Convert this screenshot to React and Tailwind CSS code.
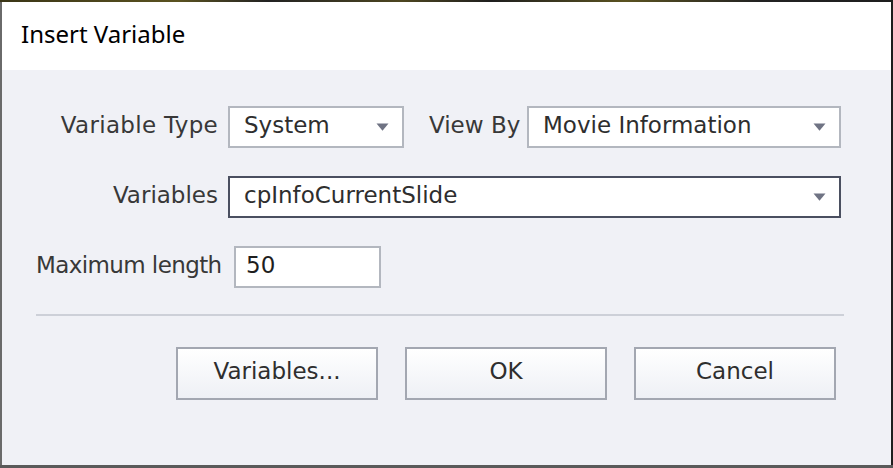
import React from "react";

const titleFont = { fontFamily: '"Noto Sans", "Open Sans", sans-serif' };
const bodyFont = { fontFamily: '"DejaVu Sans", Verdana, sans-serif' };

function Arrow() {
  return (
    <svg width="13" height="8" viewBox="0 0 13 8" className="shrink-0">
      <path d="M0.5 0.5 L12.5 0.5 L6.5 7.8 Z" fill="#6f7383" />
    </svg>
  );
}

function Dropdown({ value, className, focused }) {
  return (
    <div
      className={
        "flex h-[42px] items-center justify-between bg-white pl-[14px] pr-[13px] border-2 " +
        (focused ? "border-[#4a4f60] " : "border-[#b3b7bf] ") +
        className
      }
    >
      <span className="text-[23px] leading-none text-[#2e2e2e] pb-[4px] whitespace-nowrap">{value}</span>
      <Arrow />
    </div>
  );
}

function Btn({ children }) {
  return (
    <button className="flex h-[53px] w-[202px] items-center justify-center border-2 border-[#a3a7b1] bg-[linear-gradient(#ffffff,#eef0f5)] text-[23px] leading-none text-[#2e2e2e] pb-[4px]">
      {children}
    </button>
  );
}

export default function App() {
  return (
    <div className="w-[893px] h-[468px] overflow-hidden flex flex-col bg-[#5c5c5c]" style={bodyFont}>
      <div className="h-[2px] shrink-0 bg-[linear-gradient(90deg,#3a3516_0%,#5a5220_20%,#222_30%,#4d4620_45%,#1e1e1e_55%,#5a5220_70%,#222_85%,#1e1e1e_100%)]" />
      <div className="flex flex-1">
        <div className="w-[2px] bg-[#6a6a6a]" />
        <div className="flex-1 flex flex-col">
          <div className="h-[68px] shrink-0 bg-white flex items-center pl-[19px] pb-[4px]" style={titleFont}>
            <span className="text-[24px] text-black leading-none">Insert Variable</span>
          </div>
          <div className="flex-1 bg-[#f0f1f6] flex flex-col">
            {/* Row 1 */}
            <div className="flex items-center mt-[36px]">
              <div className="w-[216px] text-right text-[23px] leading-none text-[#383838] pb-[4px] whitespace-nowrap tracking-[0.3px]">Variable Type</div>
              <Dropdown value="System" className="ml-[10px] w-[176px]" />
              <div className="ml-[25px] text-[23px] leading-none text-[#383838] pb-[4px] w-[89px] whitespace-nowrap">View By</div>
              <Dropdown value="Movie Information" className="ml-[9px] w-[314px]" />
            </div>
            {/* Row 2 */}
            <div className="flex items-center mt-[28px]">
              <div className="w-[216px] text-right text-[23px] leading-none text-[#383838] pb-[4px]">Variables</div>
              <Dropdown value="cpInfoCurrentSlide" className="ml-[10px] w-[613px]" focused />
            </div>
            {/* Row 3 */}
            <div className="flex items-center mt-[28px] pl-[34px]">
              <div className="w-[198px] whitespace-nowrap text-[23px] leading-none text-[#383838] pb-[4px] tracking-[-0.6px]">Maximum length</div>
              <div className="h-[42px] w-[147px] bg-white border-2 border-[#b3b7bf] flex items-center pl-[10px]">
                <span className="text-[23px] leading-none text-[#1e1e1e] pb-[4px]">50</span>
              </div>
            </div>
            {/* Separator */}
            <div className="mt-[26px] ml-[34px] w-[808px] h-[2px] bg-[#cdd0d8]" />
            {/* Buttons */}
            <div className="flex mt-[31px] pl-[174px] gap-[27px]">
              <Btn>Variables...</Btn>
              <Btn>OK</Btn>
              <Btn>Cancel</Btn>
            </div>
          </div>
        </div>
        <div className="w-[2px] bg-[#1e1e1e]" />
      </div>
      <div className="h-[3px] shrink-0 bg-[#5a5a5a]" />
    </div>
  );
}
